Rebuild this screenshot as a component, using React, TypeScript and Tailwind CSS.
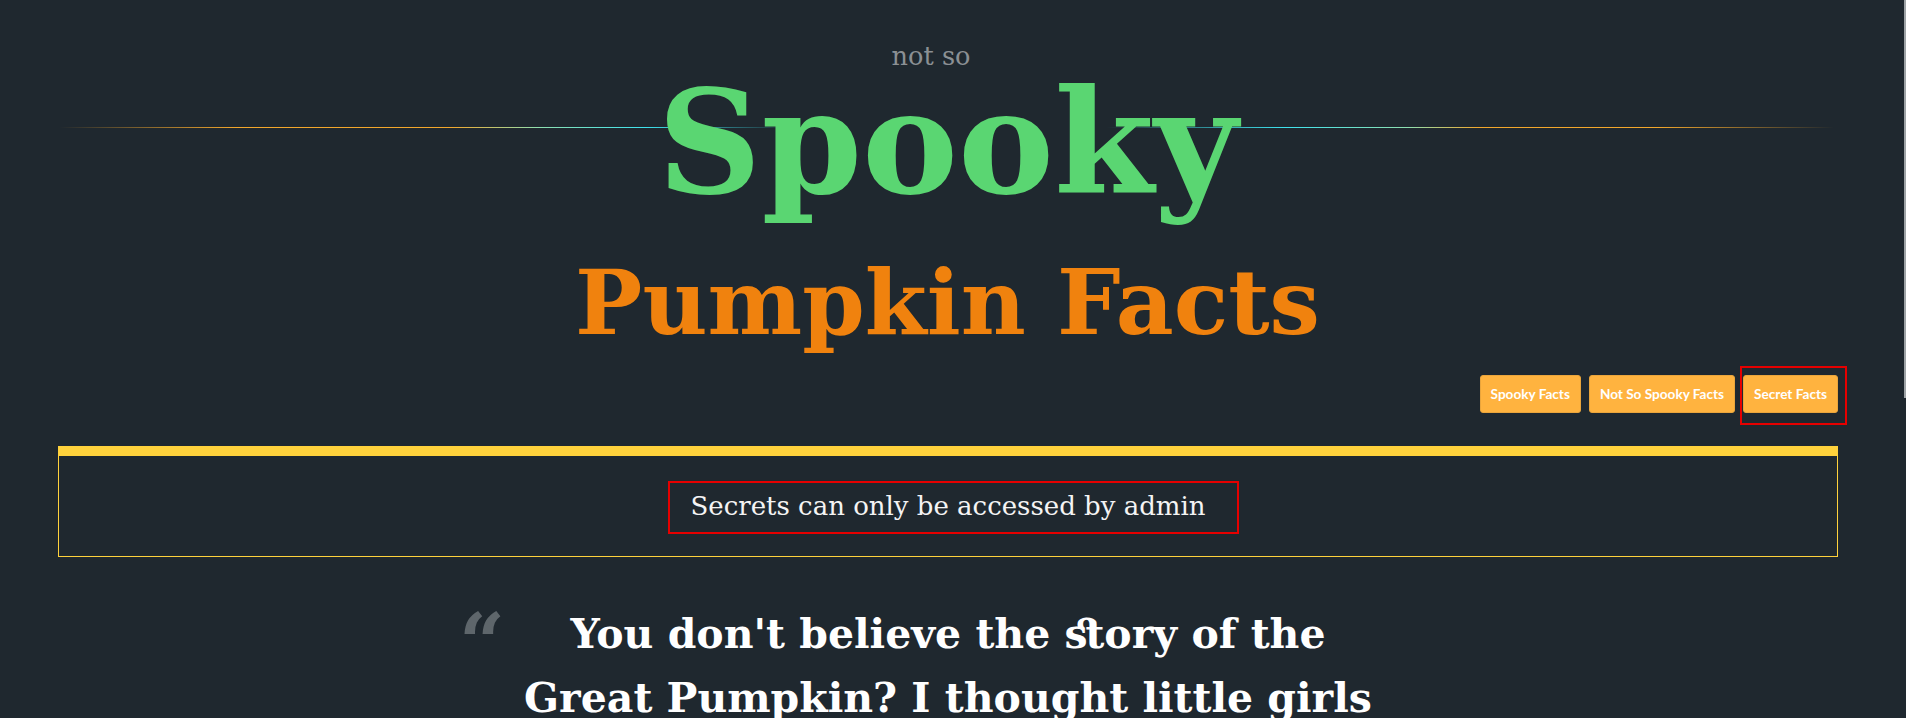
import React from "react";

const serif = { fontFamily: "'DejaVu Serif', serif" };

const tabs = ["Spooky Facts", "Not So Spooky Facts", "Secret Facts"];

function Header() {
  return (
    <header className="relative flex flex-col items-center" style={serif}>
      {/* gradient rule behind the title */}
      <div className="absolute top-[127px] left-[60px] right-[61px] h-px bg-[linear-gradient(90deg,transparent_0%,#f2a72c_10%,#f2a72c_22%,#8ee0b0_27%,#3ee2ee_33%,transparent_41%,transparent_59%,#3ee2ee_69%,#8ee0b0_76%,#f2a72c_80%,#f2a72c_90%,transparent_100%)]" />
      <p className="relative mt-[41px] pr-[33px] text-[25.6px] leading-[30px] text-[#8b9094]">
        not so
      </p>
      <h1 className="relative text-[144px] leading-[144px] font-bold text-[#5ad672]">
        Spooky
      </h1>
      <h2 className="relative mt-[43px] text-[89.5px] leading-[90px] font-bold text-[#f0820e]">
        Pumpkin Facts
      </h2>
    </header>
  );
}

function Tabs() {
  return (
    <nav
      className="mt-[27px] flex justify-end gap-2"
      style={{ fontFamily: "Lato, sans-serif" }}
    >
      {tabs.map((tab) => (
        <div key={tab} className="relative">
          <button className="h-[38px] px-[10px] rounded-[3px] border border-[#eaa53c] bg-[#ffb33f] text-[13.6px] leading-[20px] font-bold text-white">
            {tab}
          </button>
          {tab === "Secret Facts" && (
            <div className="absolute -left-[3px] -right-[9px] -top-[9px] -bottom-[12px] border-2 border-[#e60000] pointer-events-none" />
          )}
        </div>
      ))}
    </nav>
  );
}

export default function App() {
  return (
    <div className="flex min-h-screen bg-[#1f282f]">
      <main className="flex-1 pl-[58px] pr-[57px]">
        <div className="-ml-[58px] -mr-[57px]">
          <Header />
        </div>
        <Tabs />

        {/* message box */}
        <section
          className="mt-[33px] border border-t-[10px] border-[#ffd23c] py-[32px] text-center"
          style={serif}
        >
          <span className="relative inline-block text-[26px] leading-[36px] text-[#f4f4f4]">
            Secrets can only be accessed by admin
            <span className="absolute -left-[22px] -right-[33px] -top-[7px] -bottom-[10px] border-2 border-[#e60000]" />
          </span>
        </section>

        {/* quote */}
        <blockquote className="relative mx-auto mt-[45px] w-[870px] text-center" style={serif}>
          <span className="absolute -left-[54px] top-[1px] text-[80px] leading-[80px] font-bold text-[#5e666b]">
            “
          </span>
          <p className="text-[41px] leading-[64px] font-bold text-white [font-variant-ligatures:common-ligatures_discretionary-ligatures]">
            You don't believe the story of the Great Pumpkin? I thought little
            girls always believed in things like that...
          </p>
        </blockquote>
      </main>
      <div className="w-[11px] flex justify-end">
        <div className="w-[2px] h-[398px] bg-[#9ea3a6]" />
      </div>
    </div>
  );
}
